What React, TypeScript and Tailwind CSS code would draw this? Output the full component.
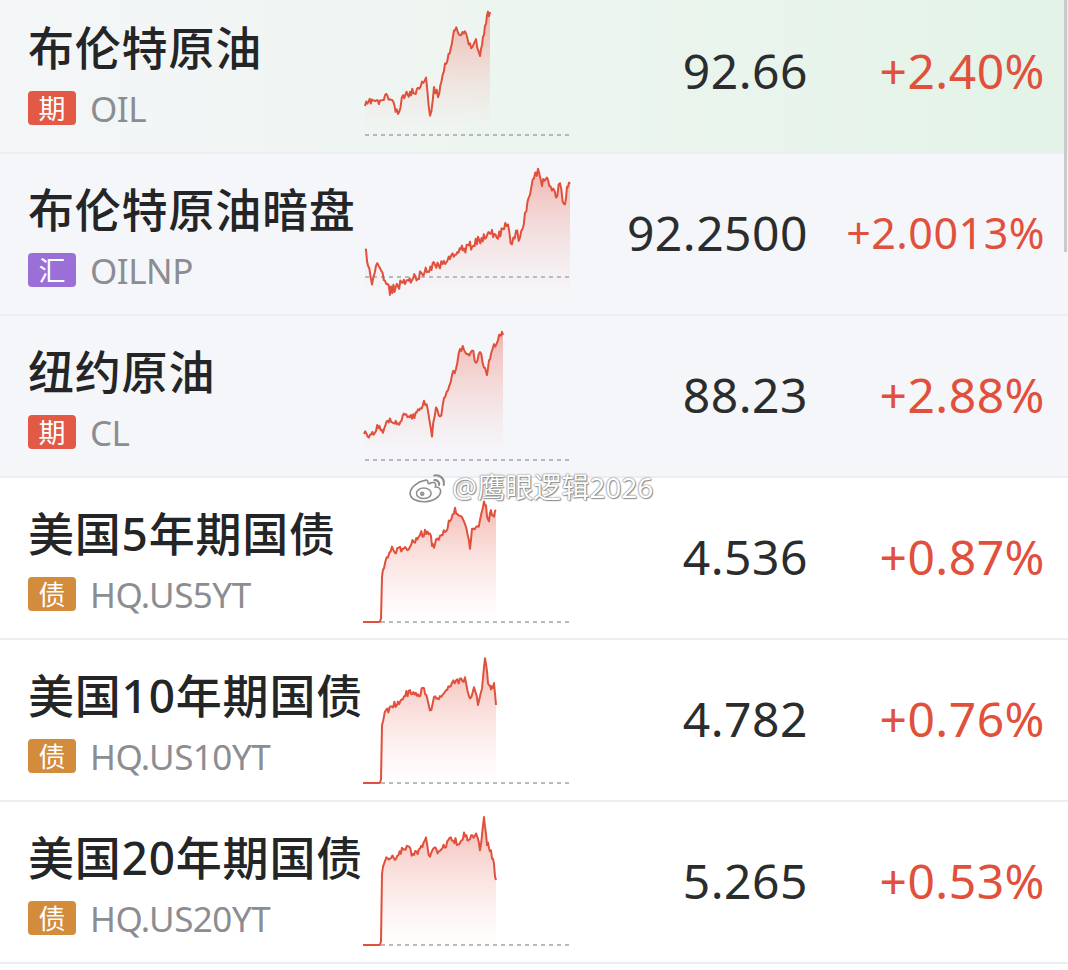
import React from "react";

type Pt = [number, number];

type Row = {
  name: string;
  tag: string;
  tagClass: string;
  code: string;
  price: string;
  change: string;
  changeSize: string;
  bg: string;
  top: number;
  dash: number;
  seed: number;
  jit: number;
  pts: Pt[];
};

const rows: Row[] = [
  {
    name: "布伦特原油",
    tag: "期",
    tagClass: "bg-[#e25a45]",
    code: "OIL",
    price: "92.66",
    change: "+2.40%",
    changeSize: "text-[48px]",
    bg: "bg-gradient-to-r from-[#f4f6f8] via-[#edf5f0] to-[#e3f3e7]",
    top: -8,
    dash: 135,
    seed: 11,
    jit: 3.5,
    pts: [
      [365, 106], [372, 100], [380, 103], [385, 96], [392, 100], [398, 116], [403, 96],
      [410, 93], [418, 90], [422, 80], [426, 78], [430, 119], [434, 88], [438, 96],
      [445, 64], [452, 45], [455, 28], [460, 36], [466, 33], [470, 46], [476, 40],
      [480, 56], [482, 45], [485, 25], [488, 14], [490, 12],
    ],
  },
  {
    name: "布伦特原油暗盘",
    tag: "汇",
    tagClass: "bg-[#9b6fd8]",
    code: "OILNP",
    price: "92.2500",
    change: "+2.0013%",
    changeSize: "text-[43px]",
    bg: "bg-[#f5f6fa]",
    top: 154,
    dash: 277,
    seed: 29,
    jit: 4.5,
    pts: [
      [365, 250], [368, 262], [372, 286], [376, 264], [380, 272], [385, 282], [390, 291],
      [398, 285], [405, 283], [412, 278], [420, 275], [428, 268], [435, 266], [445, 262],
      [455, 256], [462, 250], [470, 246], [478, 240], [485, 238], [492, 232], [498, 237],
      [504, 228], [508, 222], [512, 248], [516, 230], [520, 240], [525, 214], [530, 195],
      [534, 178], [538, 172], [542, 183], [548, 180], [552, 188], [556, 196], [560, 185],
      [564, 206], [567, 190], [570, 184],
    ],
  },
  {
    name: "纽约原油",
    tag: "期",
    tagClass: "bg-[#e25a45]",
    code: "CL",
    price: "88.23",
    change: "+2.88%",
    changeSize: "text-[48px]",
    bg: "bg-[#f5f6fa]",
    top: 316,
    dash: 460,
    seed: 47,
    jit: 3.5,
    pts: [
      [364, 434], [370, 438], [376, 428], [383, 430], [390, 420], [398, 423], [405, 414],
      [412, 418], [418, 410], [424, 404], [428, 408], [432, 434], [436, 405], [440, 418],
      [444, 400], [448, 390], [452, 378], [456, 366], [460, 350], [464, 347], [468, 355],
      [472, 350], [476, 361], [480, 352], [484, 366], [487, 374], [490, 356], [494, 346],
      [498, 340], [501, 333], [503, 335],
    ],
  },
  {
    name: "美国5年期国债",
    tag: "债",
    tagClass: "bg-[#d38b3c]",
    code: "HQ.US5YT",
    price: "4.536",
    change: "+0.87%",
    changeSize: "text-[48px]",
    bg: "bg-white",
    top: 478,
    dash: 622,
    seed: 61,
    jit: 3.5,
    pts: [
      [363, 622], [381, 622], [382, 580], [384, 565], [388, 555], [392, 550], [396, 552],
      [400, 548], [405, 550], [410, 545], [415, 540], [420, 535], [425, 533], [430, 535],
      [433, 547], [436, 540], [440, 535], [445, 532], [450, 520], [455, 510], [460, 518],
      [465, 522], [470, 546], [472, 530], [476, 530], [480, 520], [484, 498], [486, 506],
      [488, 521], [491, 512], [494, 518], [496, 510],
    ],
  },
  {
    name: "美国10年期国债",
    tag: "债",
    tagClass: "bg-[#d38b3c]",
    code: "HQ.US10YT",
    price: "4.782",
    change: "+0.76%",
    changeSize: "text-[48px]",
    bg: "bg-white",
    top: 640,
    dash: 783,
    seed: 83,
    jit: 3.5,
    pts: [
      [363, 783], [381, 783], [382, 722], [386, 712], [392, 706], [398, 702], [404, 696],
      [410, 692], [418, 696], [424, 688], [430, 710], [434, 700], [440, 698], [446, 688],
      [452, 686], [456, 678], [460, 682], [465, 680], [470, 696], [474, 690], [478, 702],
      [482, 690], [485, 660], [488, 680], [491, 690], [494, 686], [496, 705],
    ],
  },
  {
    name: "美国20年期国债",
    tag: "债",
    tagClass: "bg-[#d38b3c]",
    code: "HQ.US20YT",
    price: "5.265",
    change: "+0.53%",
    changeSize: "text-[48px]",
    bg: "bg-white",
    top: 802,
    dash: 945,
    seed: 97,
    jit: 3.5,
    pts: [
      [363, 945], [381, 945], [382, 872], [385, 860], [390, 856], [396, 860], [402, 850],
      [408, 848], [414, 856], [420, 848], [426, 840], [430, 858], [434, 850], [440, 852],
      [446, 845], [452, 838], [458, 843], [464, 835], [470, 840], [476, 832], [480, 850],
      [484, 820], [487, 842], [490, 850], [493, 860], [496, 880],
    ],
  },
];

function rng(seed: number) {
  let s = seed;
  return () => {
    s = (s * 16807) % 2147483647;
    return s / 2147483647;
  };
}

function Spark({ r, idx }: { r: Row; idx: number }) {
  const rand = rng(r.seed);
  const line: Pt[] = [];
  for (let i = 0; i < r.pts.length - 1; i++) {
    const [x0, y0] = r.pts[i];
    const [x1, y1] = r.pts[i + 1];
    const flat = y0 === r.dash && y1 === r.dash;
    const steps = Math.max(1, Math.round((x1 - x0) / 1.2));
    for (let k = 0; k < steps; k++) {
      const t = k / steps;
      const j = flat || (i === 0 && k === 0) ? 0 : (rand() - 0.5) * 2 * r.jit;
      line.push([x0 + (x1 - x0) * t - 363, y0 + (y1 - y0) * t + j - r.top]);
    }
  }
  const last = r.pts[r.pts.length - 1];
  line.push([last[0] - 363, last[1] - r.top]);
  const d = line.map((p, i) => `${i ? "L" : "M"}${p[0].toFixed(1)} ${p[1].toFixed(1)}`).join(" ");
  const maxY = Math.max(...line.map((p) => p[1]));
  const base = Math.max(r.dash - r.top - 4, maxY + 2);
  const area = `${d} L${line[line.length - 1][0].toFixed(1)} ${base} L${line[0][0].toFixed(1)} ${base} Z`;
  const dy = r.dash - r.top;
  const id = `g${idx}`;
  return (
    <svg width="210" height="160" viewBox="0 0 210 160" className="shrink-0">
      <defs>
        <linearGradient id={id} x1="0" y1="0" x2="0" y2="1">
          <stop offset="0%" stopColor="#ec8a7e" stopOpacity="0.6" />
          <stop offset="100%" stopColor="#f6c9c3" stopOpacity="0" />
        </linearGradient>
      </defs>
      <line x1="2" y1={dy} x2="207" y2={dy} stroke="#a2a4a8" strokeWidth="1.3" strokeDasharray="4 4" />
      <path d={area} fill={`url(#${id})`} />
      <path d={d} fill="none" stroke="#e0503c" strokeWidth="2" strokeLinejoin="round" />
    </svg>
  );
}

function Weibo() {
  return (
    <svg width="40" height="32" viewBox="0 0 38 30">
      <path
        d="M15 9c-6 1-13 7-13 12 0 5 6 8 13 8 9 0 16-5 16-10 0-3-3-4-5-4 1-3 0-5-4-4-2 1-3 1-3 0 0-3-1-3-4-2z"
        fill="#fff"
        stroke="#8d8d8d"
        strokeWidth="1.6"
      />
      <ellipse cx="15" cy="21" rx="7" ry="5" fill="#fff" stroke="#8d8d8d" strokeWidth="1.4" />
      <circle cx="13.5" cy="21.5" r="2.2" fill="#9a9a9a" />
      <path d="M25 4c5-1 10 3 9 9" fill="none" stroke="#8d8d8d" strokeWidth="2" strokeLinecap="round" />
      <path d="M25 8.5c2.5-.4 5 1.5 4.5 4.5" fill="none" stroke="#8d8d8d" strokeWidth="2" strokeLinecap="round" />
    </svg>
  );
}

export default function App() {
  return (
    <div className="relative w-[1068px] h-[970px] overflow-hidden bg-white font-['Noto_Sans','Noto_Sans_CJK_SC',sans-serif]">
      <div className="-mt-2">
        {rows.map((r, i) => (
          <div key={r.code} className={`flex h-[162px] border-b-2 border-[#eceef2] ${r.bg}`}>
            <div className="w-[363px] shrink-0 pl-[28px] pt-[27px]">
              <div className="text-[46px] font-medium leading-[56px] text-[#232526] whitespace-nowrap tracking-[0.8px]">
                {r.name}
              </div>
              <div className="mt-[16px] flex h-[34px] items-center gap-[14px]">
                <span
                  className={`flex h-[34px] w-[48px] items-center justify-center rounded-[4px] text-[27px] leading-none text-white ${r.tagClass}`}
                >
                  {r.tag}
                </span>
                <span className="text-[35px] leading-none text-[#8b8d92] tracking-[-0.5px]">{r.code}</span>
              </div>
            </div>
            <Spark r={r} idx={i} />
            <div className="flex w-[235px] shrink-0 items-center justify-end pb-[2px] text-[48px] text-[#2a2d2c] tracking-[0.5px]">
              {r.price}
            </div>
            <div
              className={`flex w-[237px] shrink-0 items-center justify-end pb-[2px] text-[#e0503c] tracking-[0.5px] ${r.changeSize}`}
            >
              {r.change}
            </div>
          </div>
        ))}
      </div>

      <div className="absolute left-[1064px] top-0 h-[252px] w-[3px] bg-[#c9cacc]" />

      <div className="absolute left-[408px] top-[471px] flex items-center gap-[4px]">
        <Weibo />
        <span className="text-[28px] leading-none text-white [text-shadow:0_0_1px_#707070,0_0_2px_#808080,1px_1px_1px_#999]">
          @鹰眼逻辑2026
        </span>
      </div>
    </div>
  );
}
